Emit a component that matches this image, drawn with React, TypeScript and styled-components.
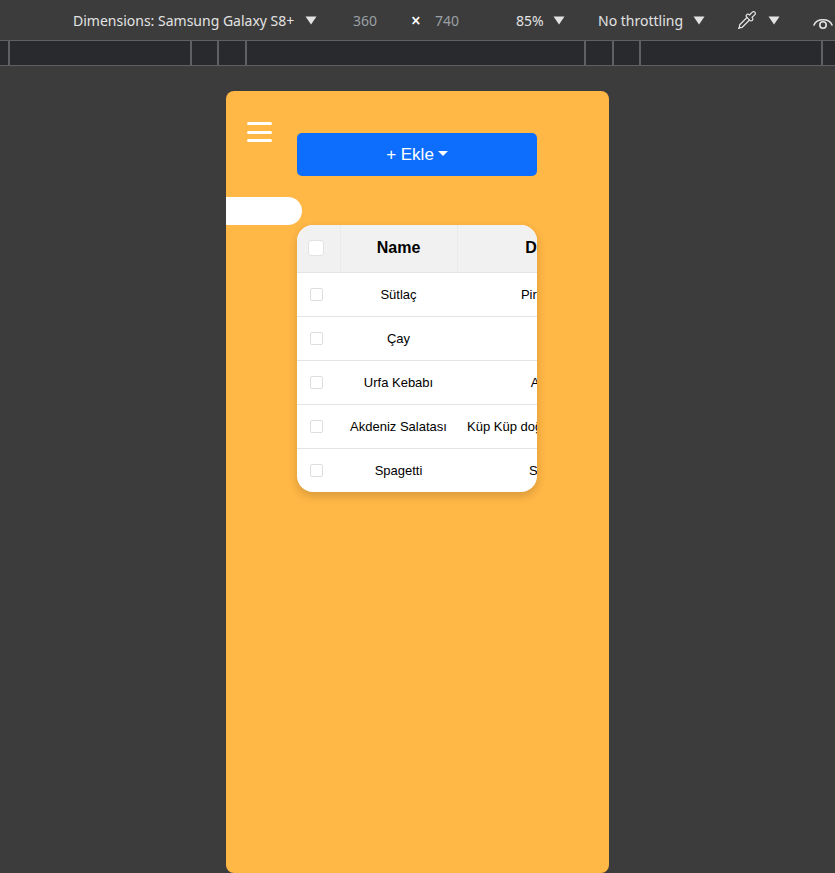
import styled, { createGlobalStyle } from "styled-components";
import { Pipette } from "lucide-react";

const GlobalStyle = createGlobalStyle`
  html, body {
    margin: 0;
    padding: 0;
    background: #3c3c3c;
    overflow: hidden;
  }
  * {
    box-sizing: border-box;
  }
`;

const Screen = styled.div`
  width: 835px;
  height: 873px;
  display: flex;
  flex-direction: column;
  background: #3c3c3c;
  overflow: hidden;
`;

const Toolbar = styled.div`
  height: 40px;
  flex-shrink: 0;
  display: flex;
  align-items: center;
  padding-left: 73px;
  font-family: "Noto Sans", "Open Sans", sans-serif;
  font-size: 14px;
  color: #e3e3e3;
  white-space: nowrap;
`;

const ToolItem = styled.div<{ $w: number; $muted?: boolean }>`
  width: ${(p) => p.$w}px;
  flex-shrink: 0;
  display: flex;
  align-items: center;
  color: ${(p) => (p.$muted ? "#9aa0a6" : "#e3e3e3")};
`;

const Times = styled.span`
  font-size: 17px;
  font-weight: 600;
  color: #ffffff;
  line-height: 1;
  margin-left: 1px;
`;

const Ruler = styled.div`
  height: 26px;
  flex-shrink: 0;
  display: flex;
  background: #292a2d;
  border-top: 1px solid #5f6061;
  border-bottom: 1px solid #5f6061;
`;

const RulerCell = styled.div<{ $w: number; $last?: boolean }>`
  width: ${(p) => p.$w}px;
  flex-shrink: 0;
  border-right: ${(p) => (p.$last ? "none" : "2px solid #5f6061")};
`;

const Device = styled.div`
  margin: 25px auto 0;
  width: 383px;
  height: 782px;
  flex-shrink: 0;
  background: #ffb745;
  border-radius: 8px;
  overflow: hidden;
  display: flex;
  align-items: flex-start;
  padding-left: 21px;
`;

const MenuToggle = styled.div`
  margin-top: 31px;
  width: 25px;
  display: flex;
  flex-direction: column;
  gap: 5.5px;
  flex-shrink: 0;
`;

const MenuBar = styled.span`
  display: block;
  height: 3px;
  border-radius: 2px;
  background: #ffffff;
`;

const Content = styled.div`
  margin-left: 25px;
  width: 240px;
  padding-top: 42px;
  display: flex;
  flex-direction: column;
  flex-shrink: 0;
  font-family: "Liberation Sans", Arial, sans-serif;
`;

const AddButton = styled.button`
  height: 43px;
  width: 240px;
  border: none;
  border-radius: 5px;
  background: #0d6efd;
  color: #ffffff;
  font-family: "Liberation Sans", Arial, sans-serif;
  font-size: 17px;
  display: flex;
  align-items: center;
  justify-content: center;
  padding: 0;
  cursor: pointer;
`;

const Caret = styled.span`
  display: inline-block;
  margin-left: 4px;
  margin-top: -3px;
  border-top: 5px solid #ffffff;
  border-left: 5px solid transparent;
  border-right: 5px solid transparent;
`;

const SearchPill = styled.input`
  margin-top: 21px;
  margin-left: -115px;
  width: 120px;
  height: 28px;
  border: none;
  border-radius: 14px;
  background: #ffffff;
  outline: none;
`;

const TableCard = styled.div`
  width: 240px;
  border-radius: 16px;
  background: #ffffff;
  overflow: hidden;
  box-shadow: 0 4px 10px rgba(0, 0, 0, 0.16);
`;

const Table = styled.table`
  table-layout: fixed;
  width: 384px;
  border-collapse: collapse;
  font-family: "Liberation Sans", Arial, sans-serif;
  color: #000000;
`;

const HeadCell = styled.th<{ $w: number; $divider?: boolean }>`
  width: ${(p) => p.$w}px;
  height: 47px;
  padding: 0;
  background: #f1f1f1;
  font-size: 16px;
  font-weight: 700;
  text-align: center;
  white-space: nowrap;
  border-bottom: 1px solid #e4e4e4;
  border-right: ${(p) => (p.$divider ? "1px solid #eaeaea" : "none")};
`;

const CheckHead = styled(HeadCell)`
  text-align: left;
  padding-left: 11px;
`;

const Row = styled.tr`
  & + & td {
    border-top: 1px solid #e4e4e4;
  }
`;

const Cell = styled.td`
  height: 44px;
  padding: 0 10px;
  font-size: 13px;
  text-align: center;
  white-space: nowrap;
  overflow: visible;
`;

const CheckCell = styled.td`
  height: 44px;
  padding: 0 0 0 13px;
`;

const Check = styled.input<{ $big?: boolean }>`
  appearance: none;
  display: block;
  margin: 0;
  width: ${(p) => (p.$big ? 16 : 13)}px;
  height: ${(p) => (p.$big ? 16 : 13)}px;
  background: #ffffff;
  border: 1px solid ${(p) => (p.$big ? "#e2e2e2" : "#dddddd")};
  border-radius: ${(p) => (p.$big ? 3 : 2)}px;
`;

function DownTriangle() {
  return (
    <svg width="12" height="9" viewBox="0 0 12 9">
      <path d="M0.5 0.5 H11.5 L6 8.5 Z" fill="#e3e3e3" />
    </svg>
  );
}

function EyeIcon() {
  return (
    <svg width="22" height="20" viewBox="0 0 22 20" fill="none" stroke="#e3e3e3" strokeWidth="1.6">
      <path d="M2 15 C4.5 8, 17.5 8, 20 15" strokeLinecap="round" />
      <circle cx="11" cy="15" r="3.2" />
    </svg>
  );
}

const items = [
  { name: "Sütlaç", desc: "Pirinç, süt, şeker" },
  { name: "Çay", desc: "Siyah çay" },
  { name: "Urfa Kebabı", desc: "Adana kebap" },
  { name: "Akdeniz Salatası", desc: "Küp Küp doğranmış domates ve salatalık" },
  { name: "Spagetti", desc: "Sulu makarna" },
];

const rulerCells = [10, 182, 27, 28, 339, 28, 27, 182, 12];

export default function App() {
  return (
    <Screen>
      <GlobalStyle />
      <Toolbar>
        <ToolItem $w={232}>Dimensions: Samsung Galaxy S8+</ToolItem>
        <ToolItem $w={48}>
          <DownTriangle />
        </ToolItem>
        <ToolItem $w={57} $muted>360</ToolItem>
        <ToolItem $w={25}>
          <Times>×</Times>
        </ToolItem>
        <ToolItem $w={81} $muted>740</ToolItem>
        <ToolItem $w={37}>85%</ToolItem>
        <ToolItem $w={45}>
          <DownTriangle />
        </ToolItem>
        <ToolItem $w={95}>No throttling</ToolItem>
        <ToolItem $w={44}>
          <DownTriangle />
        </ToolItem>
        <ToolItem $w={31}>
          <Pipette size={20} strokeWidth={1.5} color="#e3e3e3" />
        </ToolItem>
        <ToolItem $w={44}>
          <DownTriangle />
        </ToolItem>
        <ToolItem $w={24}>
          <EyeIcon />
        </ToolItem>
      </Toolbar>
      <Ruler>
        {rulerCells.map((w, i) => (
          <RulerCell key={i} $w={w} $last={i === rulerCells.length - 1} />
        ))}
      </Ruler>
      <Device>
        <MenuToggle>
          <MenuBar />
          <MenuBar />
          <MenuBar />
        </MenuToggle>
        <Content>
          <AddButton>
            + Ekle
            <Caret />
          </AddButton>
          <SearchPill type="text" />
          <TableCard>
            <Table>
              <thead>
                <tr>
                  <CheckHead $w={43} $divider>
                    <Check type="checkbox" $big />
                  </CheckHead>
                  <HeadCell $w={117} $divider>Name</HeadCell>
                  <HeadCell $w={224}>Description</HeadCell>
                </tr>
              </thead>
              <tbody>
                {items.map((item) => (
                  <Row key={item.name}>
                    <CheckCell>
                      <Check type="checkbox" />
                    </CheckCell>
                    <Cell>{item.name}</Cell>
                    <Cell>{item.desc}</Cell>
                  </Row>
                ))}
              </tbody>
            </Table>
          </TableCard>
        </Content>
      </Device>
    </Screen>
  );
}
